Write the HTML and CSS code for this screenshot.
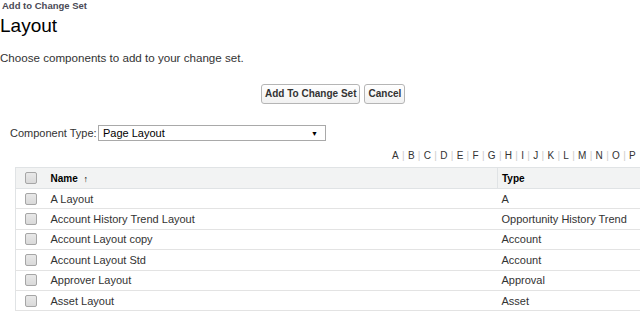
FILE: index.html
```html
<!DOCTYPE html>
<html>
<head>
<meta charset="utf-8">
<link rel="stylesheet" href="styles.css">
</head>
<body>
<div class="page">
  <div class="crumb">Add to Change Set</div>
  <h1 class="title">Layout</h1>
  <p class="intro">Choose components to add to your change set.</p>
  <div class="buttons">
    <button class="btn">Add To Change Set</button>
    <button class="btn">Cancel</button>
  </div>
  <div class="filter">
    <span class="label">Component Type:</span>
    <div class="select"><span>Page Layout</span><span class="arrow">&#9660;</span></div>
  </div>
  <div class="alpha">
    <span>A</span><i>|</i><span>B</span><i>|</i><span>C</span><i>|</i><span>D</span><i>|</i><span>E</span><i>|</i><span>F</span><i>|</i><span>G</span><i>|</i><span>H</span><i>|</i><span>I</span><i>|</i><span>J</span><i>|</i><span>K</span><i>|</i><span>L</span><i>|</i><span>M</span><i>|</i><span>N</span><i>|</i><span>O</span><i>|</i><span>P</span>
  </div>
  <table class="list">
    <colgroup><col class="c1"><col class="c2"><col class="c3"></colgroup>
    <thead>
      <tr><th class="cb"><span class="box"></span></th><th class="name">Name <span class="sort">&#8593;</span></th><th class="type">Type</th></tr>
    </thead>
    <tbody>
      <tr><td class="cb"><span class="box"></span></td><td>A Layout</td><td class="type">A</td></tr>
      <tr><td class="cb"><span class="box"></span></td><td>Account History Trend Layout</td><td class="type">Opportunity History Trend</td></tr>
      <tr><td class="cb"><span class="box"></span></td><td>Account Layout copy</td><td class="type">Account</td></tr>
      <tr><td class="cb"><span class="box"></span></td><td>Account Layout Std</td><td class="type">Account</td></tr>
      <tr><td class="cb"><span class="box"></span></td><td>Approver Layout</td><td class="type">Approval</td></tr>
      <tr><td class="cb"><span class="box"></span></td><td>Asset Layout</td><td class="type">Asset</td></tr>
    </tbody>
  </table>
</div>
</body>
</html>
```

FILE: styles.css
```css
html, body { margin: 0; padding: 0; background: #fff; }
body { font-family: "Liberation Sans", Arial, sans-serif; color: #333; overflow: hidden; }
.page { width: 640px; }
.crumb { font-size: 9.5px; font-weight: bold; color: #4a4a56; padding-left: 2px; line-height: 12px; }
.title { font-size: 19px; font-weight: normal; color: #000; margin: 3px 0 0; line-height: 22px; }
.intro { font-size: 11.6px; color: #333; margin: 14px 0 0; line-height: 13px; }
.buttons { display: flex; gap: 4px; margin: 20px 0 0 261px; }
.btn { font-family: inherit; font-size: 10px; font-weight: bold; color: #333; background: linear-gradient(#fff, #f1f1f1); border: 1px solid #b5b5b5; border-radius: 3px; padding: 0 3px; height: 20px; line-height: 12px; white-space: nowrap; }
.filter { display: flex; align-items: center; margin-top: 21px; padding-left: 10px; font-size: 11px; }
.label { margin-right: 3px; color: #333; width: 85px; white-space: nowrap; }
.select { width: 215px; height: 14px; border: 1px solid #a9a9a9; display: flex; justify-content: space-between; align-items: center; padding: 0 7px 0 4px; box-sizing: content-box; font-size: 11px; color: #000; }
.arrow { font-size: 7px; color: #000; }
.alpha { margin-top: 9px; padding-left: 392px; font-size: 10px; white-space: nowrap; line-height: 12px; }
.alpha span { color: #333; }
.alpha i { font-style: normal; color: #ccc; padding: 0 3.3px; }
.list { margin-left: 15px; margin-top: 5px; border-collapse: collapse; table-layout: fixed; width: 625px; font-size: 11px; border-top: 1px solid #e0e3e5; border-left: 1px solid #e0e3e5; }
.c1 { width: 30px; }
.c2 { width: 452px; }
.c3 { width: 143px; }
.list th { background: #f2f3f3; text-align: left; font-size: 10px; font-weight: bold; color: #000; height: 20px; border-bottom: 1px solid #e0e3e5; padding: 0 5px; }
.list td { height: 19.4px; border-bottom: 1px solid #e3e3e3; padding: 0 5px; color: #333; white-space: nowrap; }
.list .cb { padding: 0 0 0 9px; }
.list th.type { border-left: 1px solid #e0e3e5; }
.list .type { padding-left: 4px; }
.sort { font-weight: normal; font-size: 9px; margin-left: 3px; }
.box { display: block; width: 10px; height: 10px; border: 1px solid #a6a6a6; border-radius: 2px; background: linear-gradient(#e8e8e8, #d9d9d9); }
```
